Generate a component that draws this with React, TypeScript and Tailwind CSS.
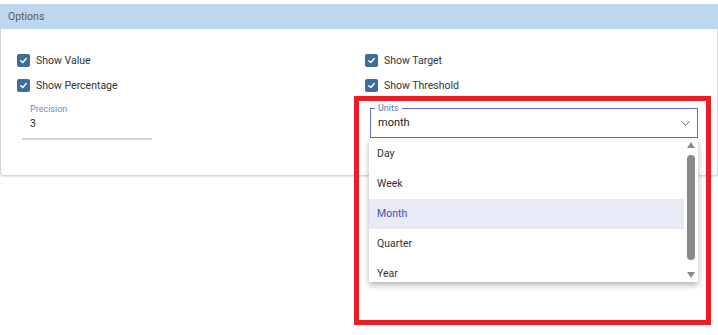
import { ChevronDown } from "lucide-react";

function Check({ label }: { label: string }) {
  return (
    <div className="flex h-[25px] items-center gap-[6px]">
      <span className="flex h-[13px] w-[13px] items-center justify-center rounded-[2px] bg-[#3c6e9c]">
        <svg width="9" height="9" viewBox="0 0 10 10" fill="none">
          <path d="M2 5.2 L4.2 7.2 L8 2.8" stroke="white" strokeWidth="1.6" strokeLinecap="round" strokeLinejoin="round" />
        </svg>
      </span>
      <span className="text-[10.5px] text-[#333]">{label}</span>
    </div>
  );
}

const units = ["Day", "Week", "Month", "Quarter", "Year"];

export default function App() {
  return (
    <div className="relative h-[335px] w-[718px] overflow-hidden bg-white pt-[4px] font-['Roboto',sans-serif]">
      {/* Panel header */}
      <div className="flex h-[25px] items-center bg-[#bdd7ee] px-2 text-[10.5px] text-[#5a5a5a]">Options</div>

      {/* Panel body */}
      <div className="h-[147px] rounded-b-[3px] border-x border-b border-[#d6d6d6] shadow-[0_1px_2px_rgba(0,0,0,0.12)]">
        <div className="grid grid-cols-[348px_1fr] pl-4 pt-[19px]">
          <div>
            <Check label="Show Value" />
            <Check label="Show Percentage" />
            <div className="ml-[5px] mt-[4px] w-[130px] border-b-2 border-[#d4d4d4] pb-[7px] pl-2">
              <div className="text-[9px] leading-[14px] text-[#6a8fb5]">Precision</div>
              <div className="text-[10.5px] leading-[15px] text-[#222]">3</div>
            </div>
          </div>
          <div>
            <Check label="Show Target" />
            <Check label="Show Threshold" />
            <div className="relative ml-[5px] mt-[10px] flex h-[30px] w-[328px] items-center justify-between border-[1.5px] border-[#5c6bc0] pl-[7px] pr-[4px]">
              <span className="absolute -top-[8px] left-[4px] bg-white px-[3px] text-[9px] leading-[14px] text-[#5c7bb5]">Units</span>
              <span className="pt-[1px] text-[11px] text-[#222]">month</span>
              <ChevronDown size={15} strokeWidth={1.5} className="text-[#555]" />
            </div>
          </div>
        </div>
      </div>

      {/* Open dropdown menu */}
      <div className="absolute left-[369px] top-[140px] h-[142px] w-[329px] overflow-hidden bg-white shadow-[0_3px_6px_rgba(0,0,0,0.3)]">
        <div className="-mt-[1px] mr-[14px]">
          {units.map((u) => (
            <div
              key={u}
              className={
                u === "Month"
                  ? "flex h-[30px] items-center bg-[#e8eaf6] pl-2 text-[10.5px] text-[#3f51b5]"
                  : "flex h-[30px] items-center pl-2 text-[10.5px] text-[#333]"
              }
            >
              {u}
            </div>
          ))}
        </div>
        <div className="absolute right-0 top-0 flex h-full w-[14px] flex-col items-center">
          <svg width="10" height="8" viewBox="0 0 10 8" className="mt-[1px]">
            <path d="M1 7 L5 1 L9 7 Z" fill="#8a8a8a" />
          </svg>
          <div className="mt-[6px] h-[105px] w-[8px] rounded-full bg-[#8a8a8a]" />
          <svg width="10" height="8" viewBox="0 0 10 8" className="mt-auto mb-[3px]">
            <path d="M1 1 L5 7 L9 1 Z" fill="#8a8a8a" />
          </svg>
        </div>
      </div>

      {/* Red annotation box */}
      <div className="pointer-events-none absolute left-[354px] top-[96px] h-[229px] w-[357px] border-[5px] border-[#ee1c25]" />
    </div>
  );
}
